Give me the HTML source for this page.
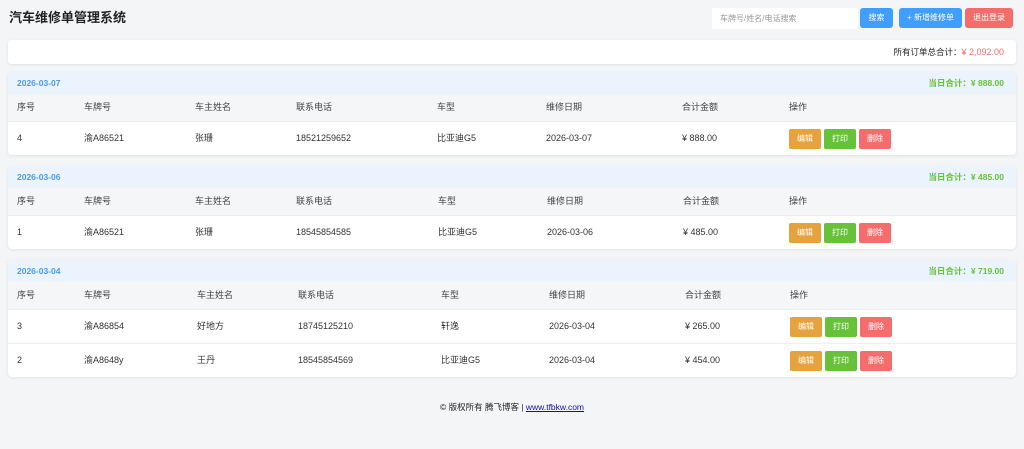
<!DOCTYPE html><html><head><meta charset="utf-8"><style>
*{box-sizing:border-box;margin:0;padding:0}
body{width:1024px;height:449px;background:#f4f5f7;font-family:"Liberation Sans","Noto Sans CJK SC",sans-serif;font-size:9px;color:#333;position:relative;overflow:hidden}
.title{position:absolute;left:9px;top:7px;font-size:13px;font-weight:bold;color:#222}
.inp{position:absolute;left:712px;top:8px;width:146px;height:21px;background:#fff;border-radius:2px;color:#999;font-size:8px;padding:5px 8px}
.btn{position:absolute;height:20px;border-radius:3px;color:#fff;font-size:8px;text-align:center;line-height:20px}
.card{position:absolute;left:8px;width:1008px;background:#fff;border-radius:4px;box-shadow:0 1px 3px rgba(0,0,0,.08)}
.grp{position:absolute;left:8px;width:1008px;border-radius:4px;overflow:hidden;box-shadow:0 1px 3px rgba(0,0,0,.08);background:#fff}
.gh{height:22px;background:#ebf3fd;line-height:22px;padding:0 9px;font-weight:bold;font-size:8.5px;color:#4a9de8;position:relative}
.gh span{position:absolute;right:12px;color:#67c23a}
.row{display:flex;height:34px;line-height:32px;border-top:1px solid #eee}
.row.th{height:27px;line-height:27px;background:#f5f6f8;border-top:none;color:#444}
.row div{padding-left:9px;white-space:nowrap}
.b{display:inline-block;width:32px;height:20px;line-height:20px;text-align:center;color:#fff;border-radius:2px;font-size:8px;margin-right:3px;vertical-align:middle}
.o{background:#e6a23c}.g{background:#67c23a}.r{background:#f56c6c}
</style></head><body>
<div class="title">汽车维修单管理系统</div>
<div class="inp">车牌号/姓名/电话搜索</div>
<div class="btn" style="left:860px;top:8px;width:33px;background:#409eff">搜索</div>
<div class="btn" style="left:899px;top:8px;width:63px;background:#409eff">+ 新增维修单</div>
<div class="btn" style="left:965px;top:8px;width:48px;background:#f56c6c">退出登录</div>
<div class="card" style="top:40px;height:24px;text-align:right;padding-right:12px;line-height:24px;font-size:8.5px;color:#222">所有订单总合计：<span style="color:#f56c6c;font-size:9px">¥ 2,092.00</span></div>

<div class="grp" style="top:72px">
<div class="gh">2026-03-07<span>当日合计：¥ 888.00</span></div>
<div class="row th"><div style="width:67px">序号</div><div style="width:111px">车牌号</div><div style="width:101px">车主姓名</div><div style="width:141px">联系电话</div><div style="width:109px">车型</div><div style="width:136px">维修日期</div><div style="width:107px">合计金额</div><div>操作</div></div>
<div class="row"><div style="width:67px">4</div><div style="width:111px">渝A86521</div><div style="width:101px">张珊</div><div style="width:141px">18521259652</div><div style="width:109px">比亚迪G5</div><div style="width:136px">2026-03-07</div><div style="width:107px">¥ 888.00</div><div><span class="b o">编辑</span><span class="b g">打印</span><span class="b r">删除</span></div></div>
</div>

<div class="grp" style="top:166px">
<div class="gh">2026-03-06<span>当日合计：¥ 485.00</span></div>
<div class="row th"><div style="width:67px">序号</div><div style="width:111px">车牌号</div><div style="width:101px">车主姓名</div><div style="width:142px">联系电话</div><div style="width:109px">车型</div><div style="width:136px">维修日期</div><div style="width:106px">合计金额</div><div>操作</div></div>
<div class="row"><div style="width:67px">1</div><div style="width:111px">渝A86521</div><div style="width:101px">张珊</div><div style="width:142px">18545854585</div><div style="width:109px">比亚迪G5</div><div style="width:136px">2026-03-06</div><div style="width:106px">¥ 485.00</div><div><span class="b o">编辑</span><span class="b g">打印</span><span class="b r">删除</span></div></div>
</div>

<div class="grp" style="top:260px">
<div class="gh">2026-03-04<span>当日合计：¥ 719.00</span></div>
<div class="row th"><div style="width:67px">序号</div><div style="width:113px">车牌号</div><div style="width:101px">车主姓名</div><div style="width:143px">联系电话</div><div style="width:108px">车型</div><div style="width:136px">维修日期</div><div style="width:105px">合计金额</div><div>操作</div></div>
<div class="row"><div style="width:67px">3</div><div style="width:113px">渝A86854</div><div style="width:101px">好地方</div><div style="width:143px">18745125210</div><div style="width:108px">轩逸</div><div style="width:136px">2026-03-04</div><div style="width:105px">¥ 265.00</div><div><span class="b o">编辑</span><span class="b g">打印</span><span class="b r">删除</span></div></div>
<div class="row"><div style="width:67px">2</div><div style="width:113px">渝A8648y</div><div style="width:101px">王丹</div><div style="width:143px">18545854569</div><div style="width:108px">比亚迪G5</div><div style="width:136px">2026-03-04</div><div style="width:105px">¥ 454.00</div><div><span class="b o">编辑</span><span class="b g">打印</span><span class="b r">删除</span></div></div>
</div>

<div style="position:absolute;top:401px;left:0;width:1024px;text-align:center;font-size:8.5px;color:#222">© 版权所有 腾飞博客 | <span style="color:#1a0dab;text-decoration:underline">www.tfbkw.com</span></div>
</body></html>
